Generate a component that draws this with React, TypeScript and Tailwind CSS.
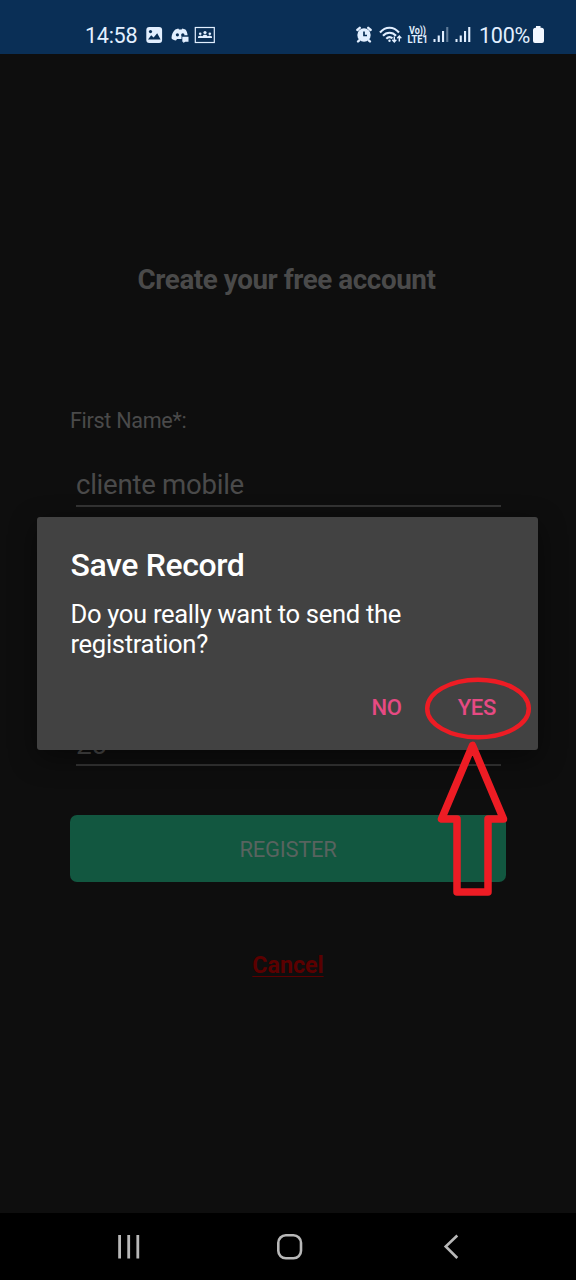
import React from "react";

function SignalBars({ last = 1 }: { last?: number }) {
  return (
    <svg width="16" height="18" viewBox="0 0 16 18" fill="#e2efff">
      <rect x="0.5" y="14" width="2" height="3" />
      <rect x="4.7" y="10.5" width="2.1" height="6.5" />
      <rect x="9" y="6" width="2.1" height="11" />
      <rect x="13.2" y="2" width="2.1" height="15" opacity={last} />
    </svg>
  );
}

function StatusBar() {
  return (
    <header className="flex h-[54px] shrink-0 items-start bg-[#0a2f56] pl-[85px] pt-[23px] text-[#e2efff]">
      <span className="mt-px w-[61px] text-[21.6px] leading-[24px] tracking-[-0.3px]">14:58</span>
      <svg className="mt-[3px]" width="17" height="18" viewBox="0 0 17 18">
        <rect x="0.3" y="1" width="15.8" height="16" rx="3" fill="#e2efff" />
        <circle cx="4.5" cy="5.6" r="1.6" fill="#0a2f56" />
        <path d="M2 13.4 5.2 9.3 7.6 11.6 11.2 7.2 14.6 13.4Z" fill="#0a2f56" />
      </svg>
      <svg className="ml-[8px] mt-[3px]" width="19" height="18" viewBox="0 0 19 18">
        <path d="M4.3 3.5 7.3 2.5l.7 1h2.6l.8-1 3 1c1.5 1.8 2 3.6 2.200 5.800H10.500v3.600H6l-1 1.600C3 14.500 1.500 13.600.5 12.300.5 8.700 2 5.500 4.300 3.500Z" fill="#e2efff" />
        <circle cx="6.4" cy="8.800" r="1.600" fill="#0a2f56" />
        <circle cx="11.8" cy="8.800" r="1.600" fill="#0a2f56" />
        <path d="M11.300 10.800h6.200v5h-3.200L12.300 17v-1.200h-1Z" fill="#e2efff" />
      </svg>
      <svg className="ml-[4px] mt-[3px]" width="22" height="18" viewBox="0 0 22 18">
        <rect x="1.300" y="1.500" width="19" height="15" fill="none" stroke="#e2efff" strokeWidth="1.200" />
        <g fill="#e2efff">
          <circle cx="6.200" cy="7.700" r="1.300" />
          <circle cx="11" cy="6.500" r="1.600" />
          <circle cx="15.800" cy="7.700" r="1.300" />
          <path d="M4 10.500 6.500 9.500 8.300 10.200 9.800 8.700h2.400l1.500 1.500 2-.7L18 10.500V12H4Z" />
        </g>
      </svg>

      <svg className="ml-[139px] mt-[2px]" width="18" height="19" viewBox="0 0 18 19">
        <circle cx="9" cy="10" r="6.700" fill="#e2efff" />
        <path d="M2.300 5 4.800 2.800M15.700 5 13.200 2.800M4.200 15.300 3 16.500M13.800 15.300l1.200 1.200" stroke="#e2efff" strokeWidth="2.400" strokeLinecap="round" />
        <path d="M9 6.500v4h3" fill="none" stroke="#0a2f56" strokeWidth="1.700" />
      </svg>
      <svg className="ml-[6px] mt-[2px]" width="24" height="19" viewBox="0 0 24 19" fill="none" stroke="#e2efff">
        <path d="M1 7.500C6.500 1.100 14.500 1.100 20 7.500" strokeWidth="2.100" />
        <path d="M4 10.800c3.500-4 9.500-4 13 0" strokeWidth="2.100" />
        <path d="M7.300 13.800c1.900-2 4.400-2 6.200-.5" strokeWidth="2.100" />
        <circle cx="10.500" cy="15.700" r="1.200" fill="#e2efff" stroke="none" />
        <path d="M15.300 11.500v5M13.300 14.700l2 2.200 2-2.200M20.300 16.500v-5M18.300 13.300l2-2.200 2 2.200" strokeWidth="1.400" />
      </svg>
      <svg className="ml-[4px] mt-[2px]" width="23" height="20" viewBox="0 0 23 20" fill="#e2efff" fontFamily="Roboto" fontWeight="700">
        <text x="2" y="8.800" fontSize="10" textLength="17" lengthAdjust="spacingAndGlyphs">Vo))</text>
        <text x="0.500" y="18" fontSize="10.500" textLength="20.500" lengthAdjust="spacingAndGlyphs">LTE1</text>
      </svg>
      <div className="ml-[3px] mt-[2px] flex gap-[6px]">
        <SignalBars last={0.4} />
        <SignalBars />
      </div>
      <span className="ml-[8px] mt-px w-[53px] text-[21.6px] leading-[24px] tracking-[-0.300px]">100%</span>
      <svg className="mt-[2px]" width="13" height="19" viewBox="0 0 13 19">
        <path d="M4 1h4.500v1.700H9.500q2.500 0 2.500 2.500V16q0 2-2 2H3q-2 0-2-2V5.200q0-2.500 2.500-2.500H4Z" fill="#f2f7ff" />
      </svg>
    </header>
  );
}

function RegisterForm() {
  return (
    <main className="flex h-[1159px] flex-col bg-[#0e0e0e] pl-[70px] pr-[70px] text-[#4a4a4a]">
      <h1 className="mt-[209px] -ml-[3px] text-center text-[27.8px] font-bold leading-[34px] tracking-[-0.440px]">Create your free account</h1>
      <label className="mt-[110px] text-[21.6px] leading-[28px] tracking-[-0.320px]">First Name*:</label>
      <div className="ml-[6px] mr-[5px] mt-[31px] h-[41px] border-b-2 border-[#343434] text-[27.6px] leading-[38px] tracking-[-0.270px]">cliente mobile</div>
      <div className="ml-[6px] mr-[5px] mt-[218px] h-[41px] border-b-2 border-[#343434] text-[28px] leading-[40px] tracking-[-0.300px]">20</div>
      <button className="mt-[49px] h-[67px] w-[436px] rounded-[7px] bg-[#125740] pt-[2px] text-[22px] leading-[28px] tracking-[-0.300px] text-[#58635f]">REGISTER</button>
      <a className="mt-[69px] text-center text-[23.2px] font-bold leading-[28px] text-[#5b0000] underline decoration-1 underline-offset-[3px]">Cancel</a>
    </main>
  );
}

function ConfirmDialog() {
  return (
    <section className="absolute left-[37px] top-[517px] flex h-[233px] w-[501px] flex-col rounded-[3px] bg-[#424242] pl-[33.500px] pr-[34px] pt-[29px] text-white shadow-[0_8px_28px_rgba(0,0,0,0.450)]">
      <h2 className="text-[32px] font-medium leading-[38px] tracking-[-0.400px]">Save Record</h2>
      <p className="mt-[16px] text-[25.6px] leading-[29.5px] tracking-[-0.330px]">Do you really want to send the registration?</p>
      <div className="mt-[35px] flex justify-end gap-[56px] pr-[8px] text-[22px] font-medium leading-[28px] tracking-[-0.300px] text-[#e64a83]">
        <button>NO</button>
        <button>YES</button>
      </div>
    </section>
  );
}

function Annotation() {
  return (
    <svg className="pointer-events-none absolute left-[420px] top-[670px]" width="120" height="235" viewBox="420 670 120 235" fill="none" stroke="#ed1c24">
      <ellipse cx="478" cy="708.500" rx="50.800" ry="28.800" strokeWidth="4.500" />
      <path d="M472.500 745.500 441.500 819H457V892H488V819H503.500Z" strokeWidth="7.500" strokeLinejoin="round" />
    </svg>
  );
}

function NavigationBar() {
  return (
    <nav className="flex h-[67px] items-center bg-black pl-[116px]">
      <svg width="26" height="28" viewBox="0 0 26 28" fill="none" stroke="#b8b8b8" strokeWidth="2.800">
        <path d="M3.600 2v23.500M12.700 2v23.500M21.800 2v23.500" />
      </svg>
      <svg className="ml-[134px]" width="28" height="28" viewBox="0 0 28 28" fill="none" stroke="#b8b8b8" strokeWidth="2.600">
        <rect x="2.300" y="2.300" width="22.700" height="23" rx="7.500" />
      </svg>
      <svg className="ml-[138px]" width="20" height="28" viewBox="0 0 20 28" fill="none" stroke="#b8b8b8" strokeWidth="2.600">
        <path d="M15.300 2.500 3.700 13.500 15.300 25" />
      </svg>
    </nav>
  );
}

export default function App() {
  return (
    <div className="relative flex h-[1280px] w-[576px] flex-col overflow-hidden font-['Roboto',sans-serif]">
      <StatusBar />
      <RegisterForm />
      <NavigationBar />
      <ConfirmDialog />
      <Annotation />
    </div>
  );
}
